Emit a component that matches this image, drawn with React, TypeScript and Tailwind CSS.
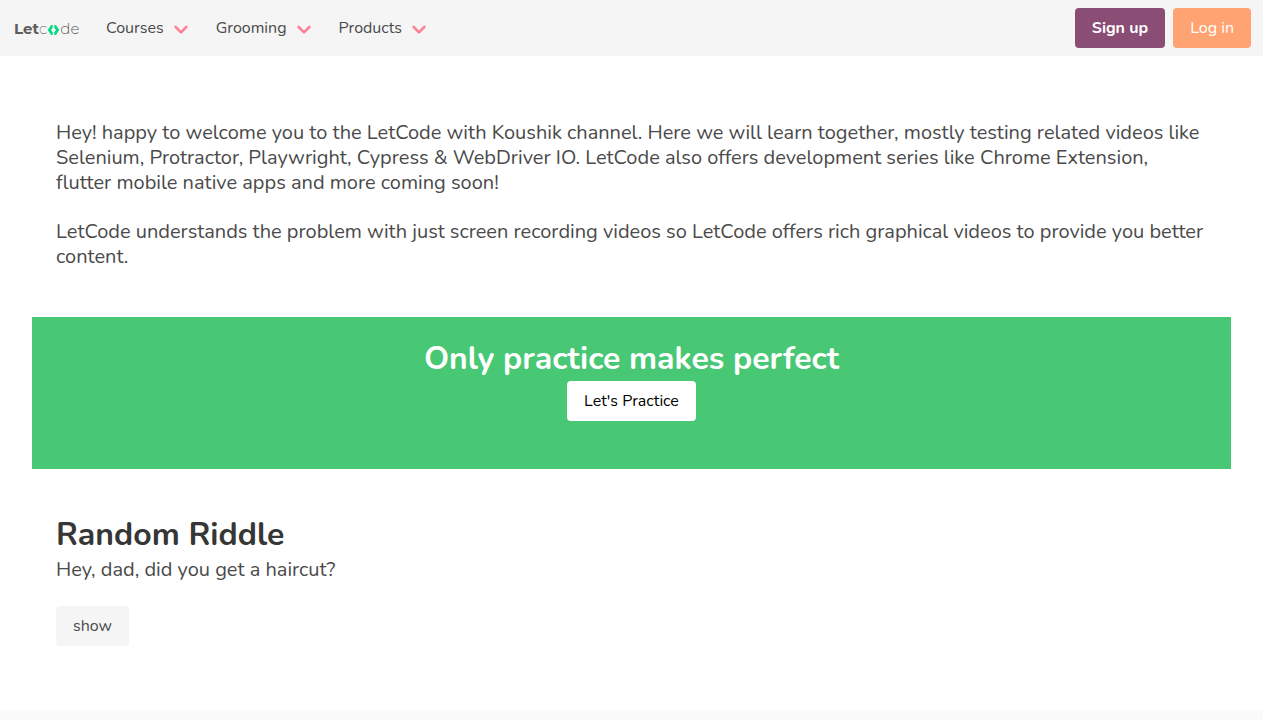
import React from "react";

const menus = ["Courses", "Grooming", "Products"];

function Chevron() {
  return (
    <svg width="14" height="10" viewBox="0 0 14 10" fill="none" className="mt-1" aria-hidden="true">
      <path d="M1.7 2L7 7.3L12.3 2" stroke="#ff7f97" strokeWidth="2.6" strokeLinecap="round" strokeLinejoin="round" />
    </svg>
  );
}

function Logo() {
  return (
    <a href="#home" aria-label="Letcode" className="flex w-[66px] items-center pt-0.5 font-['Montserrat','Nunito',sans-serif] text-[15px] leading-6 text-[#5c5c5c]">
      <span className="font-bold">Let</span>
      <span className="font-extralight">c</span>
      <svg width="13" height="11" viewBox="0 0 13 11" fill="none" className="shrink-0" aria-hidden="true">
        <path d="M5.7 2.4H4.8L2.4 6L4.8 9.6H5.7M7.3 2.4H8.2L10.6 6L8.2 9.6H7.3" stroke="#02d983" strokeWidth="2.8" />
      </svg>
      <span className="font-light">de</span>
    </a>
  );
}

export default function App() {
  return (
    <div className="flex min-h-screen flex-col bg-white pr-[17px] font-['Nunito','Roboto',sans-serif] text-[#4a4a4a]">
      <nav className="flex h-14 items-center bg-[#f5f5f5] pr-3 pl-3.5" aria-label="Main">
        <Logo />
        <div className="ml-[26px] flex grow items-center gap-7">
          {menus.map((name) => (
            <button key={name} type="button" className="flex items-center gap-2.5 text-base leading-6">
              {name}
              <Chevron />
            </button>
          ))}
        </div>
        <div className="flex gap-2">
          <a href="#signup" className="flex h-10 items-center rounded bg-[#8a4d76] px-[17px] font-bold text-white">Sign up</a>
          <a href="#login" className="flex h-10 items-center rounded bg-[#ffa372] px-[17px] text-white">Log in</a>
        </div>
      </nav>

      <main className="px-8 pt-10 pb-16">
        <section className="space-y-6 px-6 pt-6 pb-12 text-xl leading-[25px]">
          <p>
            Hey! happy to welcome you to the LetCode with Koushik channel. Here we will learn together, mostly testing related videos like Selenium, Protractor, Playwright, Cypress &amp; WebDriver IO. LetCode also offers development series like Chrome Extension, flutter mobile native apps and more coming soon!
          </p>
          <p>LetCode understands the problem with just screen recording videos so LetCode offers rich graphical videos to provide you better content.</p>
        </section>

        <section className="flex flex-col items-center bg-[#48c774] px-6 pt-6 pb-12">
          <h1 className="mb-1 text-[32px] leading-9 font-bold text-white">Only practice makes perfect</h1>
          <a href="#practice" className="flex h-10 items-center rounded bg-white px-[17px] text-black">Let's Practice</a>
        </section>

        <section className="px-6 pt-12">
          <h2 className="text-[32px] leading-9 font-bold text-[#363636]">Random Riddle</h2>
          <p className="mt-1 text-xl leading-[25px]">Hey, dad, did you get a haircut?</p>
          <button type="button" className="mt-6 h-10 rounded bg-[#f5f5f5] px-[17px]">show</button>
        </section>
      </main>
      <footer className="grow bg-[#fafafa]" />
    </div>
  );
}
